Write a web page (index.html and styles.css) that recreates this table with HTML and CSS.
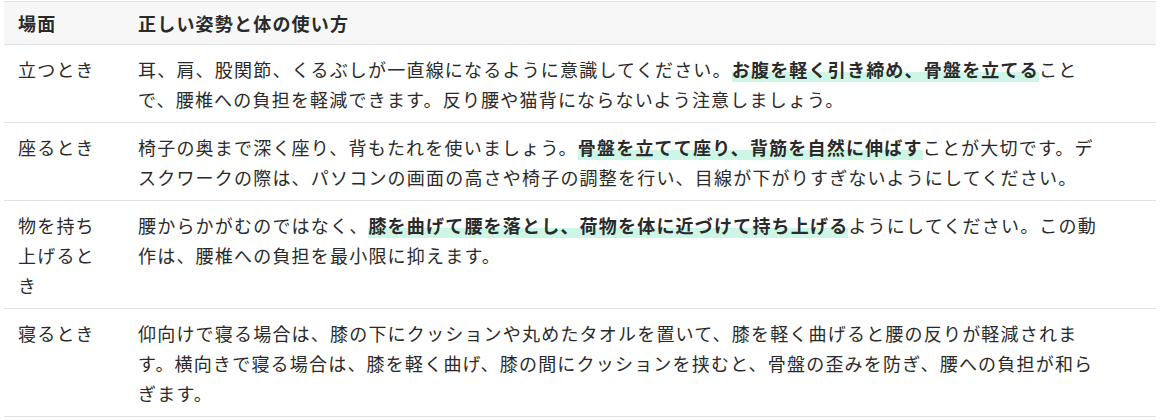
FILE: index.html
```html
<!DOCTYPE html>
<html lang="ja">
    <head>
        <meta charset="utf-8">
        <meta name="viewport" content="width=device-width, initial-scale=1.0">
        <title>正しい姿勢と体の使い方</title>
        <link rel="stylesheet" href="styles.css">
    </head>
    <body>
        <!-- 場面ごとの姿勢の表 -->
        <table class="posture-table">
            <thead>
                <tr>
                    <th class="scene">場面</th>
                    <th class="howto">正しい姿勢と体の使い方</th>
                </tr>
            </thead>
            <tbody>
                <tr>
                    <td class="scene">立つとき</td>
                    <td class="howto">耳、肩、股関節、くるぶしが一直線になるように意識してください。<strong class="mark">お腹を軽く引き締め、骨盤を立てる</strong>ことで、腰椎への負担を軽減できます。反り腰や猫背にならないよう注意しましょう。</td>
                </tr>
                <tr>
                    <td class="scene">座るとき</td>
                    <td class="howto">椅子の奥まで深く座り、背もたれを使いましょう。<strong class="mark">骨盤を立てて座り、背筋を自然に伸ばす</strong>ことが大切です。デスクワークの際は、パソコンの画面の高さや椅子の調整を行い、目線が下がりすぎないようにしてください。</td>
                </tr>
                <tr>
                    <td class="scene">物を持ち上げるとき</td>
                    <td class="howto">腰からかがむのではなく、<strong class="mark">膝を曲げて腰を落とし、荷物を体に近づけて持ち上げる</strong>ようにしてください。この動作は、腰椎への負担を最小限に抑えます。</td>
                </tr>
                <tr>
                    <td class="scene">寝るとき</td>
                    <td class="howto">仰向けで寝る場合は、膝の下にクッションや丸めたタオルを置いて、膝を軽く曲げると腰の反りが軽減されます。横向きで寝る場合は、膝を軽く曲げ、膝の間にクッションを挟むと、骨盤の歪みを防ぎ、腰への負担が和らぎます。</td>
                </tr>
            </tbody>
        </table>
    </body>
</html>
```

FILE: styles.css
```css
/* page */
body{
    margin: 0;
    padding: 1px 4px;
    background-color: #ffffff;
    color: #2a2a2a;
    font-family: "Noto Sans CJK JP", "Noto Sans", sans-serif;
}

/* the table */
.posture-table{
    width: 100%;
    border-collapse: collapse;
    font-size: 18px;
    letter-spacing: 1.2px;
    line-height: 30px;
}

.posture-table th{
    text-align: left;
    font-weight: bold;
    background-color: #f7f7f7;
    padding: 6px 14px;
    border-top: 1px solid #e2e2e2;
    border-bottom: 1px solid #e2e2e2;
}

.posture-table td{
    vertical-align: top;
    padding: 9px 14px 8px;
    border-bottom: 1px solid #e2e2e2;
}

/* first column */
.posture-table .scene{
    width: 84px;
    padding-right: 22px;
}

/* second column keeps lines a bit shorter than the row */
.posture-table .howto{
    padding-right: 52px;
}

/* marker highlight on the key phrase */
.mark{
    font-weight: bold;
    background: linear-gradient(transparent 60%, #cdf6e6 60%);
}
```
